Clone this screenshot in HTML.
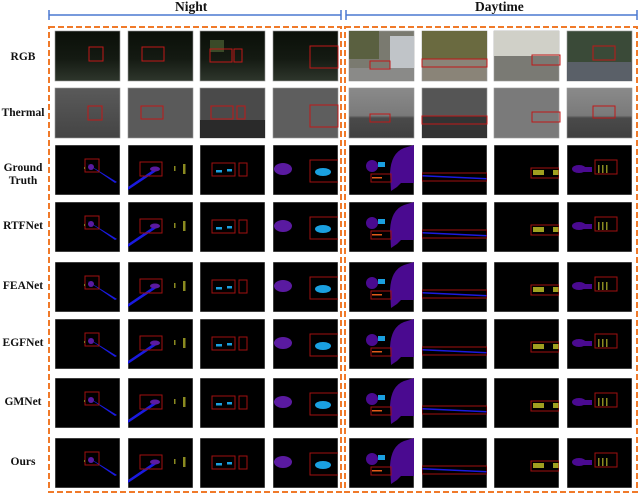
<!DOCTYPE html>
<html><head><meta charset="utf-8"><style>
body{margin:0;width:640px;height:495px;background:#fff;overflow:hidden;position:relative;font-family:"Liberation Serif",serif;}
.lb{position:absolute;width:46px;text-align:center;font-weight:bold;font-size:11.5px;line-height:13px;color:#111;left:0}
.hd{position:absolute;font-weight:bold;font-size:13.5px;top:-1px;color:#111}
svg{position:absolute;left:0;top:0}
</style></head><body>
<svg width="640" height="495" viewBox="0 0 640 495">
<defs>
<symbol id="s0" viewBox="0 0 65 50"><rect width="65" height="50" fill="#000" stroke="#999" stroke-width=".8"/><path d="M31 18 L62 37 L60 38 Z" fill="#1a1ae0"/><ellipse cx="36" cy="22" rx="3" ry="3" fill="#5a1aa0"/><rect x="30" y="14" width="14" height="13" fill="none" stroke="#a01010" stroke-width="1"/><rect x="29" y="22" width="1" height="2" fill="#7a7a20"/></symbol>
<symbol id="s1" viewBox="0 0 65 50"><rect width="65" height="50" fill="#000" stroke="#999" stroke-width=".8"/><path d="M0 45 L0 42 L28 23 L30 25 Z" fill="#1a1ae0"/><ellipse cx="27" cy="24" rx="5" ry="2.5" fill="#5a1aa0"/><rect x="12" y="17" width="22" height="14" fill="none" stroke="#a01010" stroke-width="1"/><rect x="46" y="21" width="1.5" height="5" fill="#8a8a20"/><rect x="55" y="19" width="2.5" height="10" fill="#8a8a20"/></symbol>
<symbol id="s2" viewBox="0 0 65 50"><rect width="65" height="50" fill="#000" stroke="#999" stroke-width=".8"/><rect x="16" y="25" width="6" height="2.5" fill="#1aa0e0"/><rect x="27" y="24" width="5" height="2.5" fill="#1aa0e0"/><rect x="12" y="18" width="23" height="13" fill="none" stroke="#a01010" stroke-width="1"/><rect x="39" y="18" width="8" height="13" fill="none" stroke="#a01010" stroke-width="1"/></symbol>
<symbol id="s3" viewBox="0 0 65 50"><rect width="65" height="50" fill="#000" stroke="#999" stroke-width=".8"/><ellipse cx="10" cy="24" rx="9" ry="6" fill="#5a1aa0"/><ellipse cx="50" cy="27" rx="8" ry="4" fill="#1aa0e0"/><rect x="37" y="15" width="29" height="22" fill="none" stroke="#a01010" stroke-width="1"/></symbol>
<symbol id="d0" viewBox="0 0 65 50"><rect width="65" height="50" fill="#000" stroke="#999" stroke-width=".8"/><path d="M42 46 L41 28 Q42 8 55 3 L65 0 L65 38 L52 38 L48 42 Z" fill="#4a0a90"/><ellipse cx="23" cy="21" rx="6" ry="6" fill="#4a0a90"/><rect x="29" y="17" width="7" height="5" fill="#1aa0e0"/><rect x="22" y="29" width="20" height="8" fill="none" stroke="#a01010" stroke-width="1"/><rect x="23" y="32" width="10" height="1.5" fill="#e05a1a"/></symbol>
<symbol id="d1" viewBox="0 0 65 50"><rect width="65" height="50" fill="#000" stroke="#999" stroke-width=".8"/><path d="M0 30 L65 33 L65 34.5 L0 31.5 Z" fill="#1a1ae0"/><rect x="0" y="28" width="65" height="8" fill="none" stroke="#a01010" stroke-width="1"/></symbol>
<symbol id="d2" viewBox="0 0 65 50"><rect width="65" height="50" fill="#000" stroke="#999" stroke-width=".8"/><rect x="39" y="25" width="11" height="5" fill="#a0a020"/><rect x="59" y="25" width="6" height="5" fill="#a0a020"/><rect x="37" y="23" width="28" height="10" fill="none" stroke="#a01010" stroke-width="1"/></symbol>
<symbol id="d3" viewBox="0 0 65 50"><rect width="65" height="50" fill="#000" stroke="#999" stroke-width=".8"/><ellipse cx="12" cy="24" rx="7" ry="4" fill="#4a0a90"/><rect x="15" y="22" width="10" height="5" fill="#4a0a90"/><rect x="31" y="20" width="1.5" height="8" fill="#8a8a20"/><rect x="35" y="20" width="1.5" height="8" fill="#8a8a20"/><rect x="39" y="20" width="1.5" height="8" fill="#8a8a20"/><rect x="28" y="15" width="22" height="14" fill="none" stroke="#a01010" stroke-width="1"/></symbol>
<linearGradient id="nr" x1="0" y1="0" x2="0" y2="1"><stop offset="0" stop-color="#0a0f08"/><stop offset=".55" stop-color="#141a12"/><stop offset="1" stop-color="#2e362c"/></linearGradient>
<linearGradient id="th" x1="0" y1="0" x2="0" y2="1"><stop offset="0" stop-color="#5a5a5a"/><stop offset="1" stop-color="#444"/></linearGradient>
<linearGradient id="dt" x1="0" y1="0" x2="0" y2="1"><stop offset="0" stop-color="#8a8a8a"/><stop offset=".55" stop-color="#7a7a7a"/><stop offset=".6" stop-color="#4a4a4a"/><stop offset="1" stop-color="#404040"/></linearGradient>
</defs>
<g stroke="#4a78d0" stroke-width="1.5"><line x1="49" y1="15" x2="341" y2="15"/><line x1="49" y1="10" x2="49" y2="20"/><line x1="341" y1="10" x2="341" y2="20"/><line x1="346" y1="15" x2="637" y2="15"/><line x1="346" y1="10" x2="346" y2="20"/><line x1="637" y1="10" x2="637" y2="20"/></g>
<g stroke="#999" stroke-width=".6">
<rect x="55" y="31" width="65" height="50" fill="url(#nr)"/><rect x="128" y="31" width="65" height="50" fill="url(#nr)"/><rect x="200" y="31" width="65" height="50" fill="url(#nr)"/><rect x="273" y="31" width="65" height="50" fill="url(#nr)"/>
<rect x="349" y="31" width="65" height="50" fill="#7a7a70"/><rect x="422" y="31" width="65" height="50" fill="#8a8478"/><rect x="494" y="31" width="65" height="50" fill="#7a7a74"/><rect x="567" y="31" width="65" height="50" fill="#3a4a38"/>
</g>
<rect x="422" y="31" width="65" height="28" fill="#6a6a40"/><rect x="494" y="31" width="65" height="25" fill="#d0d0c8"/><rect x="567" y="62" width="65" height="19" fill="#5a6068"/><rect x="349" y="31" width="30" height="28" fill="#5a6040"/><rect x="390" y="36" width="24" height="36" fill="#c0c4c8"/><rect x="349" y="68" width="65" height="13" fill="#8a8a88"/>
<rect x="210" y="40" width="14" height="12" fill="#3a4a28"/>
<g fill="none" stroke="#c01818" stroke-width="1">
<rect x="89" y="47" width="14" height="14"/><rect x="142" y="47" width="22" height="14"/><rect x="210" y="49" width="22" height="13"/><rect x="234" y="49" width="8" height="13"/><rect x="310" y="46" width="28" height="22"/>
<rect x="370" y="61" width="20" height="8"/><rect x="422" y="59" width="65" height="8"/><rect x="532" y="55" width="28" height="10"/><rect x="593" y="46" width="22" height="14"/>
</g>
<g stroke="#999" stroke-width=".6">
<rect x="55" y="88" width="65" height="50" fill="url(#th)"/><rect x="128" y="88" width="65" height="50" fill="#5a5a5a"/><rect x="200" y="88" width="65" height="50" fill="#4a4a4a"/><rect x="273" y="88" width="65" height="50" fill="#5e5e5e"/>
<rect x="349" y="88" width="65" height="50" fill="url(#dt)"/><rect x="422" y="88" width="65" height="50" fill="#555"/><rect x="494" y="88" width="65" height="50" fill="#7a7a7a"/><rect x="567" y="88" width="65" height="50" fill="url(#dt)"/>
</g>
<rect x="200" y="120" width="65" height="18" fill="#2a2a2a"/><rect x="422" y="116" width="65" height="22" fill="#333"/>
<g fill="none" stroke="#c01818" stroke-width="1">
<rect x="88" y="106" width="14" height="14"/><rect x="141" y="106" width="22" height="13"/><rect x="211" y="106" width="22" height="13"/><rect x="237" y="106" width="8" height="13"/><rect x="310" y="105" width="28" height="22"/>
<rect x="370" y="114" width="20" height="8"/><rect x="422" y="116" width="65" height="8"/><rect x="532" y="112" width="28" height="10"/><rect x="593" y="106" width="22" height="12"/>
</g>
<g>
<use href="#s0" x="55" y="145" width="65" height="50"/><use href="#s1" x="128" y="145" width="65" height="50"/><use href="#s2" x="200" y="145" width="65" height="50"/><use href="#s3" x="273" y="145" width="65" height="50"/><use href="#d0" x="349" y="145" width="65" height="50"/><use href="#d1" x="422" y="145" width="65" height="50"/><use href="#d2" x="494" y="145" width="65" height="50"/><use href="#d3" x="567" y="145" width="65" height="50"/>
<use href="#s0" x="55" y="202" width="65" height="50"/><use href="#s1" x="128" y="202" width="65" height="50"/><use href="#s2" x="200" y="202" width="65" height="50"/><use href="#s3" x="273" y="202" width="65" height="50"/><use href="#d0" x="349" y="202" width="65" height="50"/><use href="#d1" x="422" y="202" width="65" height="50"/><use href="#d2" x="494" y="202" width="65" height="50"/><use href="#d3" x="567" y="202" width="65" height="50"/>
<use href="#s0" x="55" y="262" width="65" height="50"/><use href="#s1" x="128" y="262" width="65" height="50"/><use href="#s2" x="200" y="262" width="65" height="50"/><use href="#s3" x="273" y="262" width="65" height="50"/><use href="#d0" x="349" y="262" width="65" height="50"/><use href="#d1" x="422" y="262" width="65" height="50"/><use href="#d2" x="494" y="262" width="65" height="50"/><use href="#d3" x="567" y="262" width="65" height="50"/>
<use href="#s0" x="55" y="319" width="65" height="50"/><use href="#s1" x="128" y="319" width="65" height="50"/><use href="#s2" x="200" y="319" width="65" height="50"/><use href="#s3" x="273" y="319" width="65" height="50"/><use href="#d0" x="349" y="319" width="65" height="50"/><use href="#d1" x="422" y="319" width="65" height="50"/><use href="#d2" x="494" y="319" width="65" height="50"/><use href="#d3" x="567" y="319" width="65" height="50"/>
<use href="#s0" x="55" y="378" width="65" height="50"/><use href="#s1" x="128" y="378" width="65" height="50"/><use href="#s2" x="200" y="378" width="65" height="50"/><use href="#s3" x="273" y="378" width="65" height="50"/><use href="#d0" x="349" y="378" width="65" height="50"/><use href="#d1" x="422" y="378" width="65" height="50"/><use href="#d2" x="494" y="378" width="65" height="50"/><use href="#d3" x="567" y="378" width="65" height="50"/>
<use href="#s0" x="55" y="438" width="65" height="50"/><use href="#s1" x="128" y="438" width="65" height="50"/><use href="#s2" x="200" y="438" width="65" height="50"/><use href="#s3" x="273" y="438" width="65" height="50"/><use href="#d0" x="349" y="438" width="65" height="50"/><use href="#d1" x="422" y="438" width="65" height="50"/><use href="#d2" x="494" y="438" width="65" height="50"/><use href="#d3" x="567" y="438" width="65" height="50"/>
</g>
<g fill="none" stroke="#f07a2a" stroke-width="2" stroke-dasharray="6 3">
<rect x="49" y="27" width="292" height="465"/><rect x="345" y="27" width="292" height="465"/>
</g>
</svg>
<div class="hd" style="left:175px">Night</div>
<div class="hd" style="left:475px">Daytime</div>
<div class="lb" style="top:51px">RGB</div>
<div class="lb" style="top:107px">Thermal</div>
<div class="lb" style="top:162px">Ground<br>Truth</div>
<div class="lb" style="top:220px">RTFNet</div>
<div class="lb" style="top:280px">FEANet</div>
<div class="lb" style="top:337px">EGFNet</div>
<div class="lb" style="top:396px">GMNet</div>
<div class="lb" style="top:456px">Ours</div>
</body></html>
